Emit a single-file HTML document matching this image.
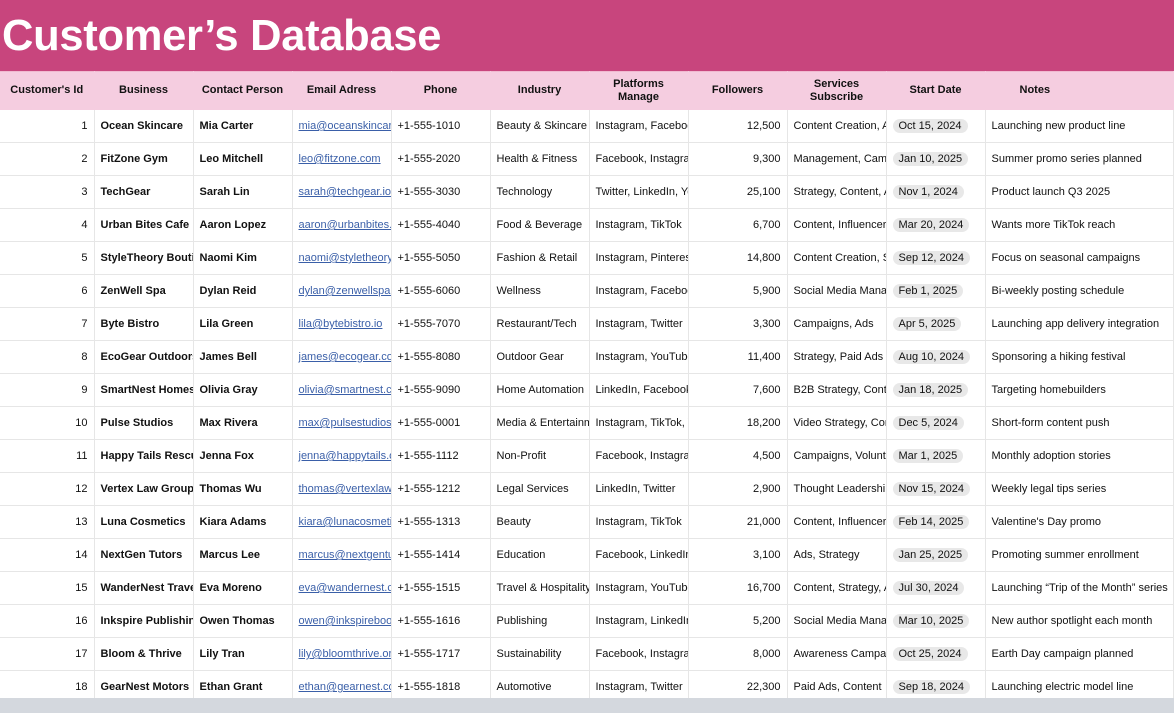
<!DOCTYPE html>
<html><head><meta charset="utf-8"><style>
body{margin:0;width:1174px;height:713px;overflow:hidden;background:#fff;font-family:"Liberation Sans",Arial,sans-serif;position:relative}
.title{position:absolute;left:0;top:0;width:1174px;height:71px;background:#c8457d;color:#fff;font-weight:bold;font-size:43.5px;line-height:72px;padding-left:2px;box-sizing:border-box;letter-spacing:-0.3px}
table{position:absolute;left:0;top:71px;border-collapse:collapse;table-layout:fixed;width:1174px}
td,th{white-space:nowrap;overflow:hidden;font-size:11px;color:#111;border-right:1px solid #e6e6e6;border-bottom:1px solid #e6e6e6;padding:0 6px;height:32px;text-overflow:clip}
th{background:#f5cde0;height:37px;font-weight:bold;font-size:11px;text-align:center;line-height:13px;border-color:#f5cde0;border-top:1px solid #f0b9d0}
td.n{text-align:right}
td.b{font-weight:bold}
td.e{color:#3a5fa8;text-decoration:underline}
.d{background:#e8e8e8;border-radius:8px;padding:1px 6px}
.bar{position:absolute;left:0;top:698px;width:1174px;height:15px;background:#d4d8de}
</style></head><body>
<div class="title">Customer’s Database</div>
<table>
<colgroup><col style="width:94px"><col style="width:99px"><col style="width:99px"><col style="width:99px"><col style="width:99px"><col style="width:99px"><col style="width:99px"><col style="width:99px"><col style="width:99px"><col style="width:99px"><col></colgroup>
<tr><th>Customer's Id</th><th>Business</th><th>Contact Person</th><th>Email Adress</th><th>Phone</th><th>Industry</th><th>Platforms<br>Manage</th><th>Followers</th><th>Services<br>Subscribe</th><th>Start Date</th><th style="text-align:left;padding-left:34px">Notes</th></tr>
<tr><td class="n">1</td><td class="b">Ocean Skincare</td><td class="b">Mia Carter</td><td class="e">mia@oceanskincare.com</td><td>+1-555-1010</td><td>Beauty &amp; Skincare</td><td>Instagram, Facebook</td><td class="n">12,500</td><td>Content Creation, Ads</td><td><span class="d">Oct 15, 2024</span></td><td>Launching new product line</td></tr>
<tr><td class="n">2</td><td class="b">FitZone Gym</td><td class="b">Leo Mitchell</td><td class="e">leo@fitzone.com</td><td>+1-555-2020</td><td>Health &amp; Fitness</td><td>Facebook, Instagram</td><td class="n">9,300</td><td>Management, Campaigns</td><td><span class="d">Jan 10, 2025</span></td><td>Summer promo series planned</td></tr>
<tr><td class="n">3</td><td class="b">TechGear</td><td class="b">Sarah Lin</td><td class="e">sarah@techgear.io</td><td>+1-555-3030</td><td>Technology</td><td>Twitter, LinkedIn, YouTube</td><td class="n">25,100</td><td>Strategy, Content, Ads</td><td><span class="d">Nov 1, 2024</span></td><td>Product launch Q3 2025</td></tr>
<tr><td class="n">4</td><td class="b">Urban Bites Cafe</td><td class="b">Aaron Lopez</td><td class="e">aaron@urbanbites.com</td><td>+1-555-4040</td><td>Food &amp; Beverage</td><td>Instagram, TikTok</td><td class="n">6,700</td><td>Content, Influencers</td><td><span class="d">Mar 20, 2024</span></td><td>Wants more TikTok reach</td></tr>
<tr><td class="n">5</td><td class="b">StyleTheory Boutique</td><td class="b">Naomi Kim</td><td class="e">naomi@styletheory.com</td><td>+1-555-5050</td><td>Fashion &amp; Retail</td><td>Instagram, Pinterest</td><td class="n">14,800</td><td>Content Creation, SEO</td><td><span class="d">Sep 12, 2024</span></td><td>Focus on seasonal campaigns</td></tr>
<tr><td class="n">6</td><td class="b">ZenWell Spa</td><td class="b">Dylan Reid</td><td class="e">dylan@zenwellspa.com</td><td>+1-555-6060</td><td>Wellness</td><td>Instagram, Facebook</td><td class="n">5,900</td><td>Social Media Management</td><td><span class="d">Feb 1, 2025</span></td><td>Bi-weekly posting schedule</td></tr>
<tr><td class="n">7</td><td class="b">Byte Bistro</td><td class="b">Lila Green</td><td class="e">lila@bytebistro.io</td><td>+1-555-7070</td><td>Restaurant/Tech</td><td>Instagram, Twitter</td><td class="n">3,300</td><td>Campaigns, Ads</td><td><span class="d">Apr 5, 2025</span></td><td>Launching app delivery integration</td></tr>
<tr><td class="n">8</td><td class="b">EcoGear Outdoors</td><td class="b">James Bell</td><td class="e">james@ecogear.com</td><td>+1-555-8080</td><td>Outdoor Gear</td><td>Instagram, YouTube</td><td class="n">11,400</td><td>Strategy, Paid Ads</td><td><span class="d">Aug 10, 2024</span></td><td>Sponsoring a hiking festival</td></tr>
<tr><td class="n">9</td><td class="b">SmartNest Homes</td><td class="b">Olivia Gray</td><td class="e">olivia@smartnest.com</td><td>+1-555-9090</td><td>Home Automation</td><td>LinkedIn, Facebook</td><td class="n">7,600</td><td>B2B Strategy, Content</td><td><span class="d">Jan 18, 2025</span></td><td>Targeting homebuilders</td></tr>
<tr><td class="n">10</td><td class="b">Pulse Studios</td><td class="b">Max Rivera</td><td class="e">max@pulsestudios.com</td><td>+1-555-0001</td><td>Media &amp; Entertainment</td><td>Instagram, TikTok, YouTube</td><td class="n">18,200</td><td>Video Strategy, Content</td><td><span class="d">Dec 5, 2024</span></td><td>Short-form content push</td></tr>
<tr><td class="n">11</td><td class="b">Happy Tails Rescue</td><td class="b">Jenna Fox</td><td class="e">jenna@happytails.org</td><td>+1-555-1112</td><td>Non-Profit</td><td>Facebook, Instagram</td><td class="n">4,500</td><td>Campaigns, Volunteers</td><td><span class="d">Mar 1, 2025</span></td><td>Monthly adoption stories</td></tr>
<tr><td class="n">12</td><td class="b">Vertex Law Group</td><td class="b">Thomas Wu</td><td class="e">thomas@vertexlaw.com</td><td>+1-555-1212</td><td>Legal Services</td><td>LinkedIn, Twitter</td><td class="n">2,900</td><td>Thought Leadership</td><td><span class="d">Nov 15, 2024</span></td><td>Weekly legal tips series</td></tr>
<tr><td class="n">13</td><td class="b">Luna Cosmetics</td><td class="b">Kiara Adams</td><td class="e">kiara@lunacosmetics.com</td><td>+1-555-1313</td><td>Beauty</td><td>Instagram, TikTok</td><td class="n">21,000</td><td>Content, Influencers</td><td><span class="d">Feb 14, 2025</span></td><td>Valentine's Day promo</td></tr>
<tr><td class="n">14</td><td class="b">NextGen Tutors</td><td class="b">Marcus Lee</td><td class="e">marcus@nextgentutors.com</td><td>+1-555-1414</td><td>Education</td><td>Facebook, LinkedIn</td><td class="n">3,100</td><td>Ads, Strategy</td><td><span class="d">Jan 25, 2025</span></td><td>Promoting summer enrollment</td></tr>
<tr><td class="n">15</td><td class="b">WanderNest Travel</td><td class="b">Eva Moreno</td><td class="e">eva@wandernest.com</td><td>+1-555-1515</td><td>Travel &amp; Hospitality</td><td>Instagram, YouTube</td><td class="n">16,700</td><td>Content, Strategy, Ads</td><td><span class="d">Jul 30, 2024</span></td><td>Launching “Trip of the Month” series</td></tr>
<tr><td class="n">16</td><td class="b">Inkspire Publishing</td><td class="b">Owen Thomas</td><td class="e">owen@inkspirebooks.com</td><td>+1-555-1616</td><td>Publishing</td><td>Instagram, LinkedIn</td><td class="n">5,200</td><td>Social Media Management</td><td><span class="d">Mar 10, 2025</span></td><td>New author spotlight each month</td></tr>
<tr><td class="n">17</td><td class="b">Bloom &amp; Thrive</td><td class="b">Lily Tran</td><td class="e">lily@bloomthrive.org</td><td>+1-555-1717</td><td>Sustainability</td><td>Facebook, Instagram</td><td class="n">8,000</td><td>Awareness Campaigns</td><td><span class="d">Oct 25, 2024</span></td><td>Earth Day campaign planned</td></tr>
<tr><td class="n">18</td><td class="b">GearNest Motors</td><td class="b">Ethan Grant</td><td class="e">ethan@gearnest.com</td><td>+1-555-1818</td><td>Automotive</td><td>Instagram, Twitter</td><td class="n">22,300</td><td>Paid Ads, Content</td><td><span class="d">Sep 18, 2024</span></td><td>Launching electric model line</td></tr>
</table>
<div class="bar"></div>
</body></html>
